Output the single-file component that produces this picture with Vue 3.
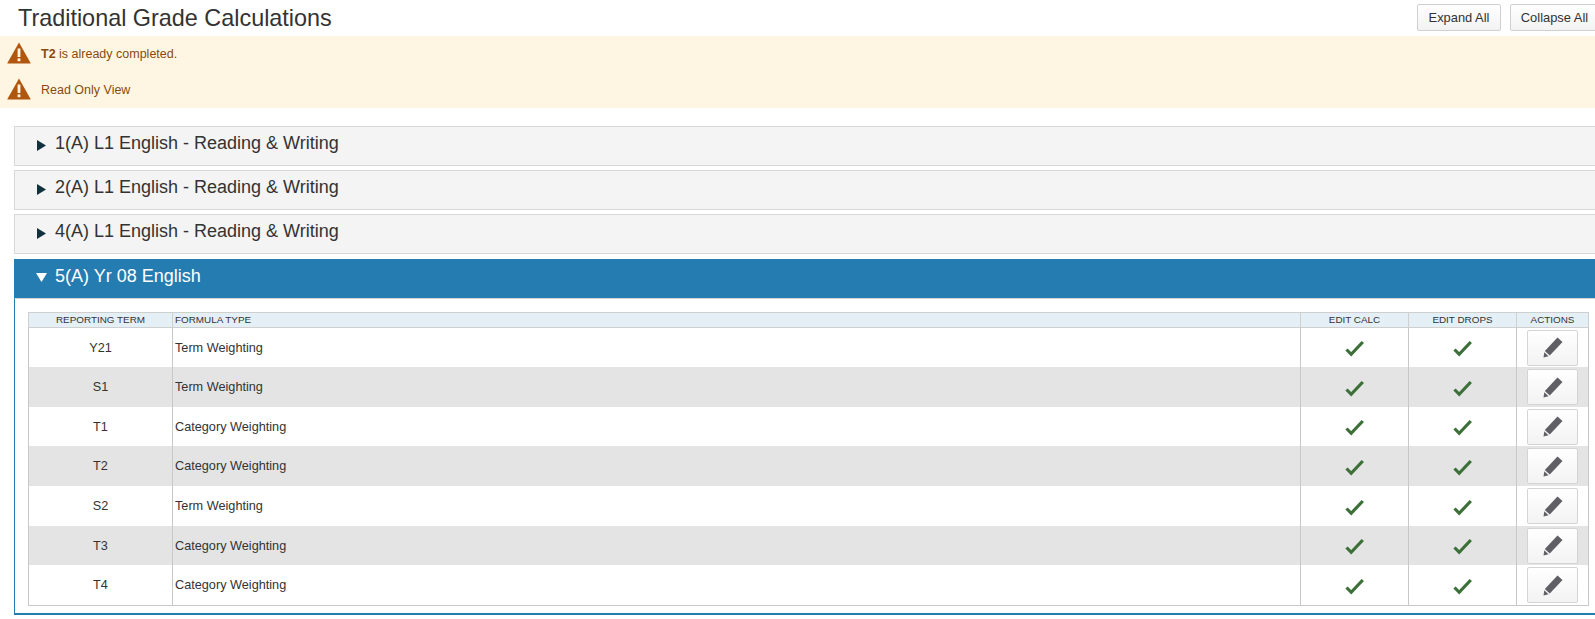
<script setup>
const panels = ['1(A) L1 English - Reading & Writing', '2(A) L1 English - Reading & Writing', '4(A) L1 English - Reading & Writing']
const rows = [
  ['Y21', 'Term Weighting'],
  ['S1', 'Term Weighting'],
  ['T1', 'Category Weighting'],
  ['T2', 'Category Weighting'],
  ['S2', 'Term Weighting'],
  ['T3', 'Category Weighting'],
  ['T4', 'Category Weighting'],
]
</script>

<template>
  <div class="page">
    <header class="top">
      <h1>Traditional Grade Calculations</h1>
      <div class="top-actions">
        <button class="btn">Expand All</button>
        <button class="btn">Collapse All</button>
      </div>
    </header>

    <section class="alerts">
      <div class="alert">
        <svg class="warn" viewBox="0 0 24 22"><path d="M12 0.5 L23.6 21 Q23.6 21.6 23 21.6 H1 Q0.4 21.6 0.4 21 Z" fill="#b0570f"/><rect x="10.6" y="6.5" width="2.8" height="8.5" fill="#fef6e3"/><rect x="10.6" y="16.4" width="2.8" height="2.8" fill="#fef6e3"/></svg>
        <span class="alert-text"><b>T2</b> is already completed.</span>
      </div>
      <div class="alert">
        <svg class="warn" viewBox="0 0 24 22"><path d="M12 0.5 L23.6 21 Q23.6 21.6 23 21.6 H1 Q0.4 21.6 0.4 21 Z" fill="#b0570f"/><rect x="10.6" y="6.5" width="2.8" height="8.5" fill="#fef6e3"/><rect x="10.6" y="16.4" width="2.8" height="2.8" fill="#fef6e3"/></svg>
        <span class="alert-text">Read Only View</span>
      </div>
    </section>

    <section class="list">
      <div v-for="p in panels" :key="p" class="panel">
        <svg class="caret" viewBox="0 0 9 10" preserveAspectRatio="none"><path d="M0 0 L9 5 L0 10 Z" fill="#12313f"/></svg>
        <span>{{ p }}</span>
      </div>

      <div class="open">
        <div class="open-head">
          <svg class="caret down" viewBox="0 0 11 9"><path d="M0 0 H11 L5.5 9 Z" fill="#fff"/></svg>
          <span>5(A) Yr 08 English</span>
        </div>
        <div class="open-body">
          <table>
            <colgroup>
              <col class="c1" /><col /><col class="c3" /><col class="c3" /><col class="c5" />
            </colgroup>
            <thead>
              <tr>
                <th>REPORTING TERM</th>
                <th class="left">FORMULA TYPE</th>
                <th>EDIT CALC</th>
                <th>EDIT DROPS</th>
                <th>ACTIONS</th>
              </tr>
            </thead>
            <tbody>
              <tr v-for="r in rows" :key="r[0]">
                <td class="term">{{ r[0] }}</td>
                <td class="left">{{ r[1] }}</td>
                <td class="mid">
                  <svg class="check" viewBox="0 0 19 17"><path d="M1.5 9.5 L6.2 14.3 L17.8 2" fill="none" stroke="#3c7038" stroke-width="3.2"/></svg>
                </td>
                <td class="mid">
                  <svg class="check" viewBox="0 0 19 17"><path d="M1.5 9.5 L6.2 14.3 L17.8 2" fill="none" stroke="#3c7038" stroke-width="3.2"/></svg>
                </td>
                <td class="mid">
                  <button class="edit">
                    <svg viewBox="0 0 20 21" class="pencil"><path d="M14.5 0.5 L19.5 5 L6.8 18.5 L1.8 14 Z" fill="#5f5f65"/><path d="M1.3 15.2 L5.5 19.2 L0.5 20.5 Z" fill="#5f5f65"/></svg>
                  </button>
                </td>
              </tr>
            </tbody>
          </table>
        </div>
      </div>
    </section>
  </div>
</template>

<style>
html, body { margin: 0; overflow: hidden; background: #fff; }
</style>

<style scoped>
.page {
  width: 1595px;
  height: 619px;
  overflow: hidden;
  font-family: "Liberation Sans", Arial, sans-serif;
  color: #333;
}
.top {
  display: flex;
  justify-content: space-between;
  height: 36px;
  padding: 0 0 0 18px;
}
h1 {
  margin: 0;
  font-size: 23.4px;
  font-weight: 400;
  line-height: 36px;
}
.top-actions {
  display: flex;
  gap: 9px;
  padding-top: 4px;
  margin-right: -7px;
}
.btn {
  width: 84px;
  height: 27px;
  padding: 0;
  border: 1px solid #d0d0d0;
  border-radius: 2px;
  background: linear-gradient(#fff, #f3f3f3);
  font: 12.9px "Liberation Sans", Arial, sans-serif;
  color: #333;
}
.btn + .btn { width: 92px; padding-right: 3px; }
.alerts {
  height: 72px;
  background: #fef6e3;
  color: #8a4a0f;
  font-size: 12.5px;
}
.alert {
  display: flex;
  align-items: center;
  height: 36px;
  padding-left: 7px;
  transform: translateY(-1px);
}
.alert-text { padding-top: 2px; }
.warn { width: 24px; height: 22px; margin-right: 10px; }
.list {
  margin: 18px -6px 0 14px;
  display: flex;
  flex-direction: column;
  gap: 4px;
}
.panel {
  display: flex;
  align-items: center;
  box-sizing: border-box;
  height: 40px;
  padding: 0 0 6px 22px;
  border: 1px solid #d8d8d8;
  background: #f4f4f4;
  font-size: 18px;
}
.caret { width: 9px; height: 11px; margin: 5px 9px 0 0; }
.caret.down { width: 11px; height: 9px; margin: 2px 8px 0 0; }
.open { margin-top: 1px; }
.open-head {
  display: flex;
  align-items: center;
  box-sizing: border-box;
  height: 39px;
  padding: 0 0 5px 22px;
  background: #247cb1;
  color: #fff;
  font-size: 18px;
}
.open-body {
  box-sizing: border-box;
  height: 317px;
  padding: 13px 0 0 13px;
  border-left: 1px solid #247cb1;
  border-top: 1px solid #d4d4d4;
  border-bottom: 2px solid #247cb1;
}
table {
  width: 1561px;
  table-layout: fixed;
  border-collapse: collapse;
}
.c1 { width: 144px; }
.c3 { width: 108px; }
.c5 { width: 72px; }
th {
  height: 14px;
  padding: 0;
  background: #e4f0f6;
  border: 1px solid #cfcfcf;
  font-size: 9.9px;
  font-weight: 400;
  line-height: 12px;
  text-align: center;
}
th.left { padding-left: 2px; text-align: left; }
td {
  padding: 0;
  height: 40px;
  border-left: 1px solid #c8c8c8;
  border-right: 1px solid #c8c8c8;
  font-size: 12.7px;
}
tbody tr:nth-child(1) td,
tbody tr:nth-child(3) td,
tbody tr:nth-child(6) td { height: 39px; }
tbody tr:nth-child(even) td { background: #e4e4e4; }
tbody tr:last-child td { border-bottom: 1px solid #c8c8c8; }
.term { text-align: center; }
td.left { padding-left: 2px; }
.mid { text-align: center; vertical-align: middle; }
.check { display: inline-block; width: 19px; height: 17px; vertical-align: middle; margin-top: 2px; }
.edit {
  display: inline-flex;
  align-items: center;
  justify-content: center;
  box-sizing: border-box;
  width: 51px;
  height: 36px;
  padding: 0;
  vertical-align: middle;
  border: 1px solid #d4d4d4;
  border-radius: 2px;
  background: linear-gradient(#fff, #f3f3f3);
}
.pencil { width: 20px; height: 21px; }
</style>
